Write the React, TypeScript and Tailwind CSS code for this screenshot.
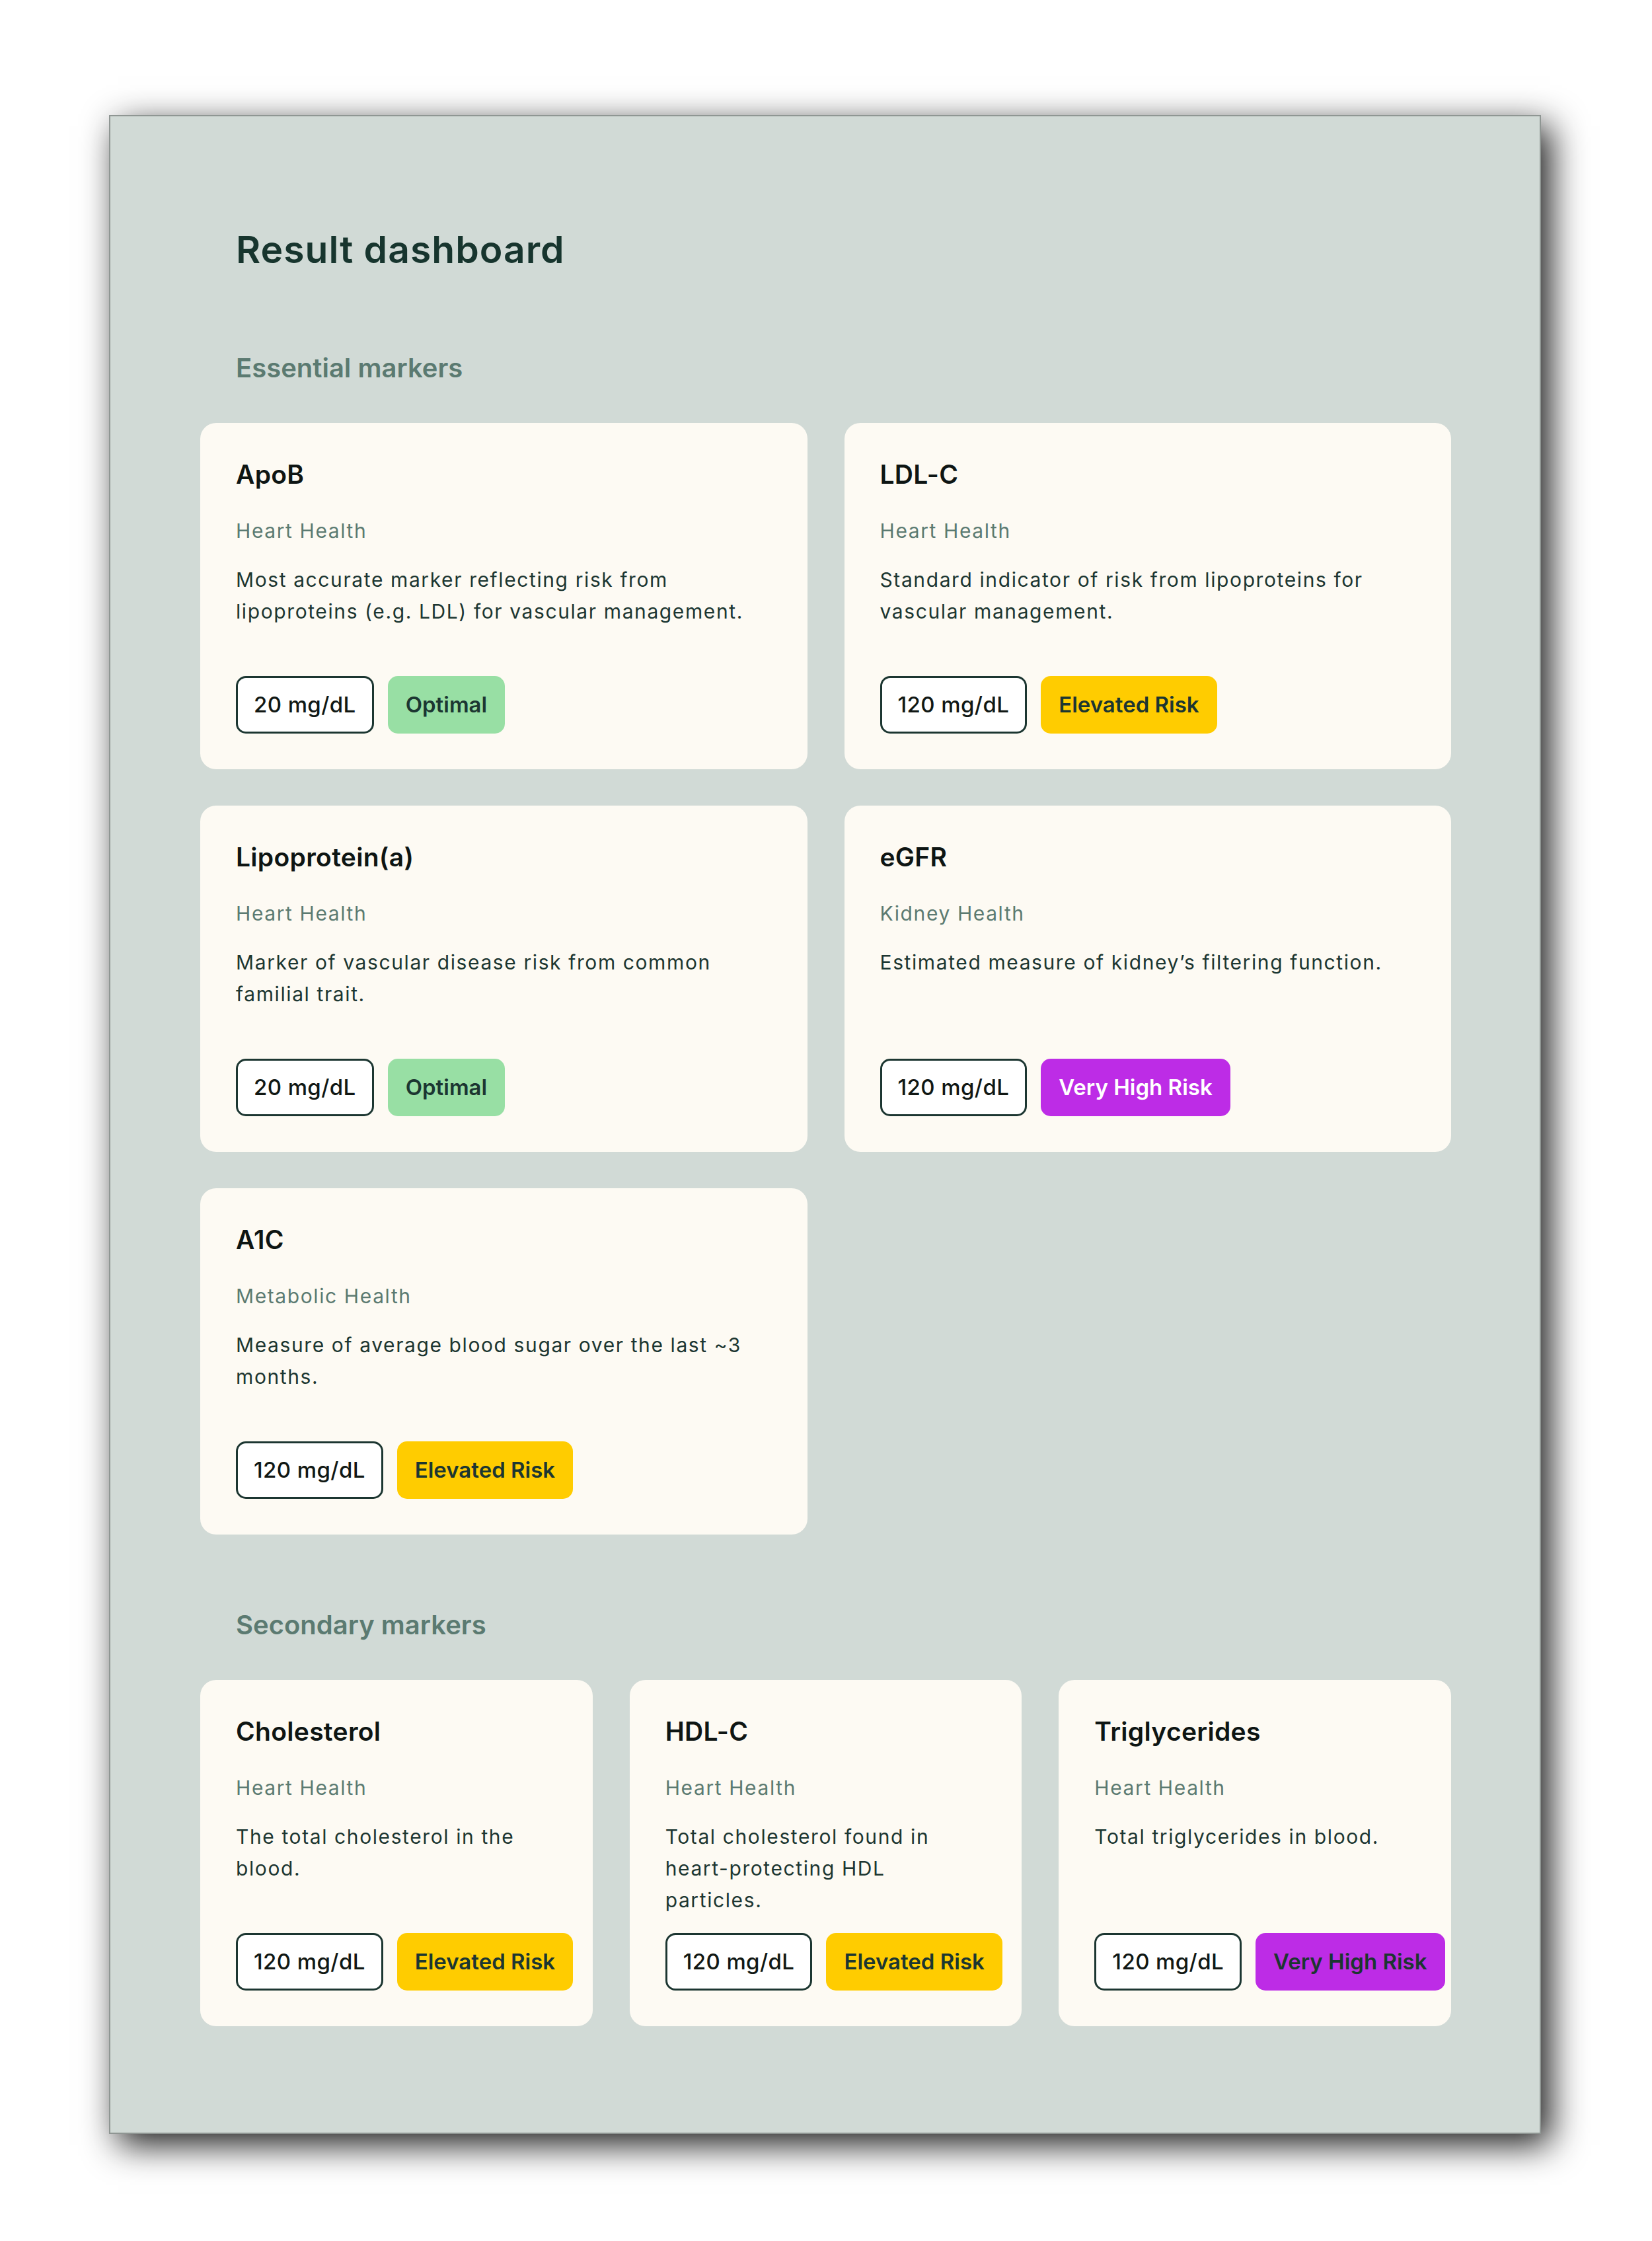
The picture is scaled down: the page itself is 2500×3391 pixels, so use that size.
import React from "react";

type Status = "optimal" | "elevated" | "veryHigh" | "veryHighDark";

type Marker = {
  name: string;
  category: string;
  description: string;
  value: string;
  status: Status;
};

const STATUS: Record<Status, { label: string; cls: string }> = {
  optimal: { label: "Optimal", cls: "bg-[#98dfa4] text-[#1c3631]" },
  elevated: { label: "Elevated Risk", cls: "bg-[#ffcc00] text-[#1c3631]" },
  veryHigh: { label: "Very High Risk", cls: "bg-[#bd2ce6] text-white" },
  veryHighDark: { label: "Very High Risk", cls: "bg-[#bd2ce6] text-[#1c3631]" },
};

const essential: Marker[] = [
  {
    name: "ApoB",
    category: "Heart Health",
    description:
      "Most accurate marker reflecting risk from lipoproteins (e.g. LDL) for vascular management.",
    value: "20 mg/dL",
    status: "optimal",
  },
  {
    name: "LDL-C",
    category: "Heart Health",
    description:
      "Standard indicator of risk from lipoproteins for vascular management.",
    value: "120 mg/dL",
    status: "elevated",
  },
  {
    name: "Lipoprotein(a)",
    category: "Heart Health",
    description: "Marker of vascular disease risk from common familial trait.",
    value: "20 mg/dL",
    status: "optimal",
  },
  {
    name: "eGFR",
    category: "Kidney Health",
    description: "Estimated measure of kidney’s filtering function.",
    value: "120 mg/dL",
    status: "veryHigh",
  },
  {
    name: "A1C",
    category: "Metabolic Health",
    description: "Measure of average blood sugar over the last ~3 months.",
    value: "120 mg/dL",
    status: "elevated",
  },
];

const secondary: Marker[] = [
  {
    name: "Cholesterol",
    category: "Heart Health",
    description: "The total cholesterol in the blood.",
    value: "120 mg/dL",
    status: "elevated",
  },
  {
    name: "HDL-C",
    category: "Heart Health",
    description: "Total cholesterol found in heart-protecting HDL particles.",
    value: "120 mg/dL",
    status: "elevated",
  },
  {
    name: "Triglycerides",
    category: "Heart Health",
    description: "Total triglycerides in blood.",
    value: "120 mg/dL",
    status: "veryHighDark",
  },
];

function MarkerCard({ m }: { m: Marker }) {
  const s = STATUS[m.status];
  return (
    <div className="flex h-[524px] flex-col rounded-[24px] bg-[#fdfaf3] px-[54px] py-[54px]">
      <h3 className="text-[39px] leading-[48px] font-semibold tracking-[0.3px] text-[#0e1513]">
        {m.name}
      </h3>
      <p className="mt-[37px] text-[30px] leading-[48px] tracking-[1.6px] text-[#5b7a71]">
        {m.category}
      </p>
      <p className="mt-[26px] text-[30px] leading-[48px] tracking-[1.6px] text-[#1c3631]">
        {m.description}
      </p>
      <div className="mt-auto flex gap-[21px] whitespace-nowrap">
        <span className="flex h-[87px] shrink-0 items-center rounded-[15px] border-[3px] border-[#1c3631] bg-white px-[24px] text-[33px] leading-none font-medium tracking-[0.4px] text-[#111814]">
          {m.value}
        </span>
        <span
          className={`flex h-[87px] shrink-0 items-center rounded-[15px] px-[27px] text-[33px] leading-none font-semibold ${s.cls}`}
        >
          {s.label}
        </span>
      </div>
    </div>
  );
}

function SectionHeading({ children }: { children: React.ReactNode }) {
  return (
    <h2 className="ml-[54px] text-[40px] leading-[40px] font-semibold text-[#5b7a71]">
      {children}
    </h2>
  );
}

export default function App() {
  return (
    <div className="min-h-[3391px] w-[2500px] bg-white pt-[174px] pl-[165px] font-['Inter','Noto_Sans',sans-serif]">
      <div className="w-[2167px] border-2 border-[#8f9693] bg-[#d1dad6] pt-[173px] pr-[134px] pb-[161px] pl-[136px] shadow-[14px_16px_50px_rgba(0,0,0,0.9)]">
        <h1 className="ml-[54px] text-[57px] leading-[57px] font-semibold tracking-[1px] text-[#17352e]">
          Result dashboard
        </h1>

        <section className="mt-[131px]">
          <SectionHeading>Essential markers</SectionHeading>
          <div className="mt-[63px] grid grid-cols-2 gap-x-[56px] gap-y-[55px]">
            {essential.map((m) => (
              <MarkerCard key={m.name} m={m} />
            ))}
          </div>
        </section>

        <section className="mt-[117px]">
          <SectionHeading>Secondary markers</SectionHeading>
          <div className="mt-[63px] grid grid-cols-3 gap-x-[56px]">
            {secondary.map((m) => (
              <MarkerCard key={m.name} m={m} />
            ))}
          </div>
        </section>
      </div>
    </div>
  );
}
